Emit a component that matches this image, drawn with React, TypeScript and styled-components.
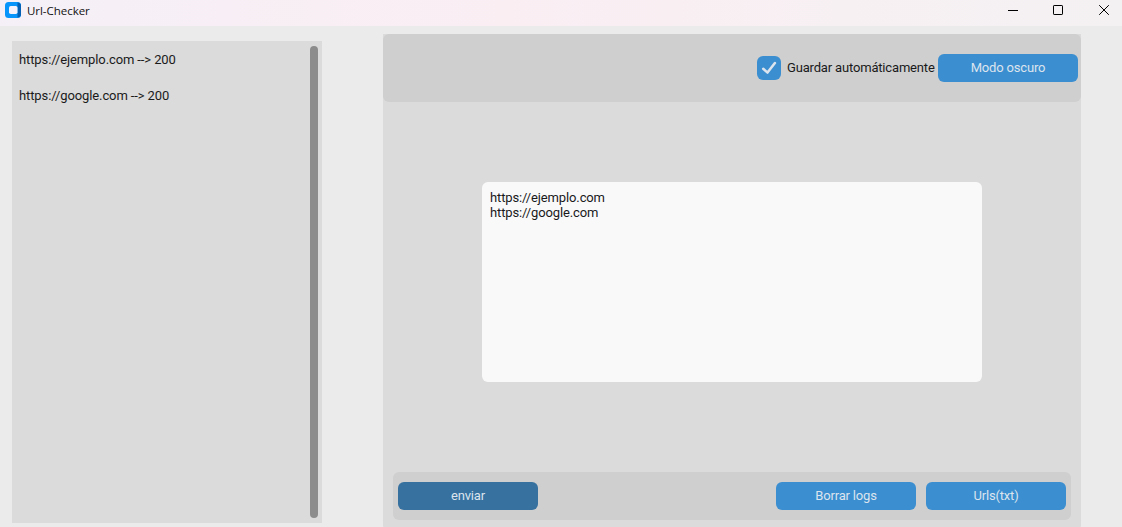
import React from 'react';
import styled, { createGlobalStyle } from 'styled-components';

const GlobalStyle = createGlobalStyle`
  * { box-sizing: border-box; }
  body { margin: 0; overflow: hidden; background: #ebebeb; }
`;

const Window = styled.div`
  display: flex;
  flex-direction: column;
  width: 1122px;
  height: 527px;
  background: #ebebeb;
  color: #1a1a1a;
  font-family: Roboto, sans-serif;
  font-size: 13px;
  line-height: 15px;
  letter-spacing: -0.11px;
`;

const TitleBar = styled.header`
  display: flex;
  align-items: flex-start;
  height: 26px;
  flex: none;
  padding-left: 5px;
  background: linear-gradient(90deg, #f5f0f7 0%, #f7eff5 20%, #faeef3 45%, #f7f0f3 75%, #f4f1f3 100%);
`;

const AppIcon = styled.svg`
  display: block;
  margin-top: 2px;
`;

const Title = styled.h1`
  flex: 1;
  margin: 3px 0 0 6px;
  font: 400 11.5px/16px 'Open Sans', sans-serif;
  letter-spacing: -0.04px;
  color: #111;
`;

const WindowButtons = styled.div`
  display: flex;
  gap: 34px;
  padding: 4px 12px 0 0;
  svg { display: block; }
  svg:first-child { margin-right: -1px; }
`;

const Content = styled.main`
  display: flex;
  flex: 1;
  min-height: 0;
  justify-content: space-between;
  padding: 8px 41px 0 12px;
`;

const LogPanel = styled.aside`
  display: flex;
  justify-content: space-between;
  width: 310px;
  height: 482px;
  margin-top: 7px;
  padding: 5px 4px 4px 7px;
  background: #dbdbdb;
`;

const LogList = styled.ul`
  display: flex;
  flex-direction: column;
  gap: 21px;
  margin: 6px 0 0;
  padding: 0;
  list-style: none;
`;

const ScrollThumb = styled.div`
  width: 8px;
  height: 472px;
  border-radius: 4px;
  background: #8c8c8c;
`;

const Workspace = styled.section`
  display: flex;
  flex-direction: column;
  align-items: center;
  justify-content: space-between;
  width: 698px;
  height: 493px;
  padding-bottom: 7px;
  border-radius: 0 0 1px 1px;
  background: #dbdbdb;
`;

const Toolbar = styled.div`
  display: flex;
  align-items: center;
  justify-content: flex-end;
  width: 100%;
  height: 68px;
  padding-right: 3px;
  border-radius: 6px;
  background: #cfcfcf;
`;

const CheckLabel = styled.label`
  display: flex;
  align-items: center;
  gap: 6px;
  width: 181px;
  letter-spacing: -0.17px;
  white-space: nowrap;
`;

const LabelText = styled.span`
  padding-bottom: 2px;
`;

const CheckBox = styled.span`
  display: flex;
  flex: none;
  width: 24px;
  height: 24px;
  border-radius: 6px;
  background: #3b8ed0;
`;

const Button = styled.button<{ $pressed?: boolean }>`
  width: 140px;
  height: 28px;
  padding: 0 0 2px;
  border: 0;
  border-radius: 6px;
  background: ${(p) => (p.$pressed ? '#36719f' : '#3b8ed0')};
  color: #dce4ee;
  font: inherit;
  letter-spacing: -0.17px;
`;

const UrlInput = styled.textarea`
  display: block;
  width: 500px;
  height: 200px;
  margin-bottom: 10px;
  padding: 8px;
  border: 0;
  border-radius: 6px;
  outline: 0;
  resize: none;
  background: #f9f9fa;
  color: #1a1a1a;
  font: inherit;
  letter-spacing: -0.13px;
`;

const ActionBar = styled.div`
  display: flex;
  align-items: center;
  gap: 10px;
  width: 678px;
  height: 48px;
  padding: 0 5px;
  border-radius: 6px;
  background: #cfcfcf;
`;

const Spacer = styled.div`
  flex: 1;
`;

const logs = ['https://ejemplo.com --> 200', 'https://google.com --> 200'];

export default function App() {
  return (
    <Window>
      <GlobalStyle />
      <TitleBar>
        <AppIcon width="16" height="16" viewBox="0 0 16 16">
          <rect width="16" height="16" rx="3.5" fill="#0795fb" />
          <path d="M12.5 4V.4Q16 .8 16 3.5v9q0 2.7-3.5 3.1z" fill="#0560b4" />
          <rect x="4" y="4" width="8.5" height="8" rx="1.8" fill="#f6f2fb" />
        </AppIcon>
        <Title>Url-Checker</Title>
        <WindowButtons>
          <svg width="12" height="12" viewBox="0 0 12 12">
            <path d="M1 6.5h10" stroke="#000" />
          </svg>
          <svg width="12" height="12" viewBox="0 0 12 12">
            <rect x="1.5" y="1.5" width="9" height="9" rx="0.6" fill="none" stroke="#000" />
          </svg>
          <svg width="12" height="12" viewBox="0 0 12 12">
            <path d="M1.2 1.2l9.6 9.6M10.8 1.2l-9.6 9.6" stroke="#000" />
          </svg>
        </WindowButtons>
      </TitleBar>
      <Content>
        <LogPanel>
          <LogList>
            {logs.map((line) => (
              <li key={line}>{line}</li>
            ))}
          </LogList>
          <ScrollThumb />
        </LogPanel>
        <Workspace>
          <Toolbar>
            <CheckLabel>
              <CheckBox>
                <svg width="24" height="24" viewBox="0 0 24 24">
                  <path d="M6.2 12.8l4.3 3.8L17.9 7.1" fill="none" stroke="#dce4ee" strokeWidth="2.5" strokeLinecap="round" strokeLinejoin="round" />
                </svg>
              </CheckBox>
              <LabelText>Guardar automáticamente</LabelText>
            </CheckLabel>
            <Button>Modo oscuro</Button>
          </Toolbar>
          <UrlInput spellCheck={false} defaultValue={'https://ejemplo.com\nhttps://google.com'} />
          <ActionBar>
            <Button $pressed>enviar</Button>
            <Spacer />
            <Button>Borrar logs</Button>
            <Button>Urls(txt)</Button>
          </ActionBar>
        </Workspace>
      </Content>
    </Window>
  );
}
